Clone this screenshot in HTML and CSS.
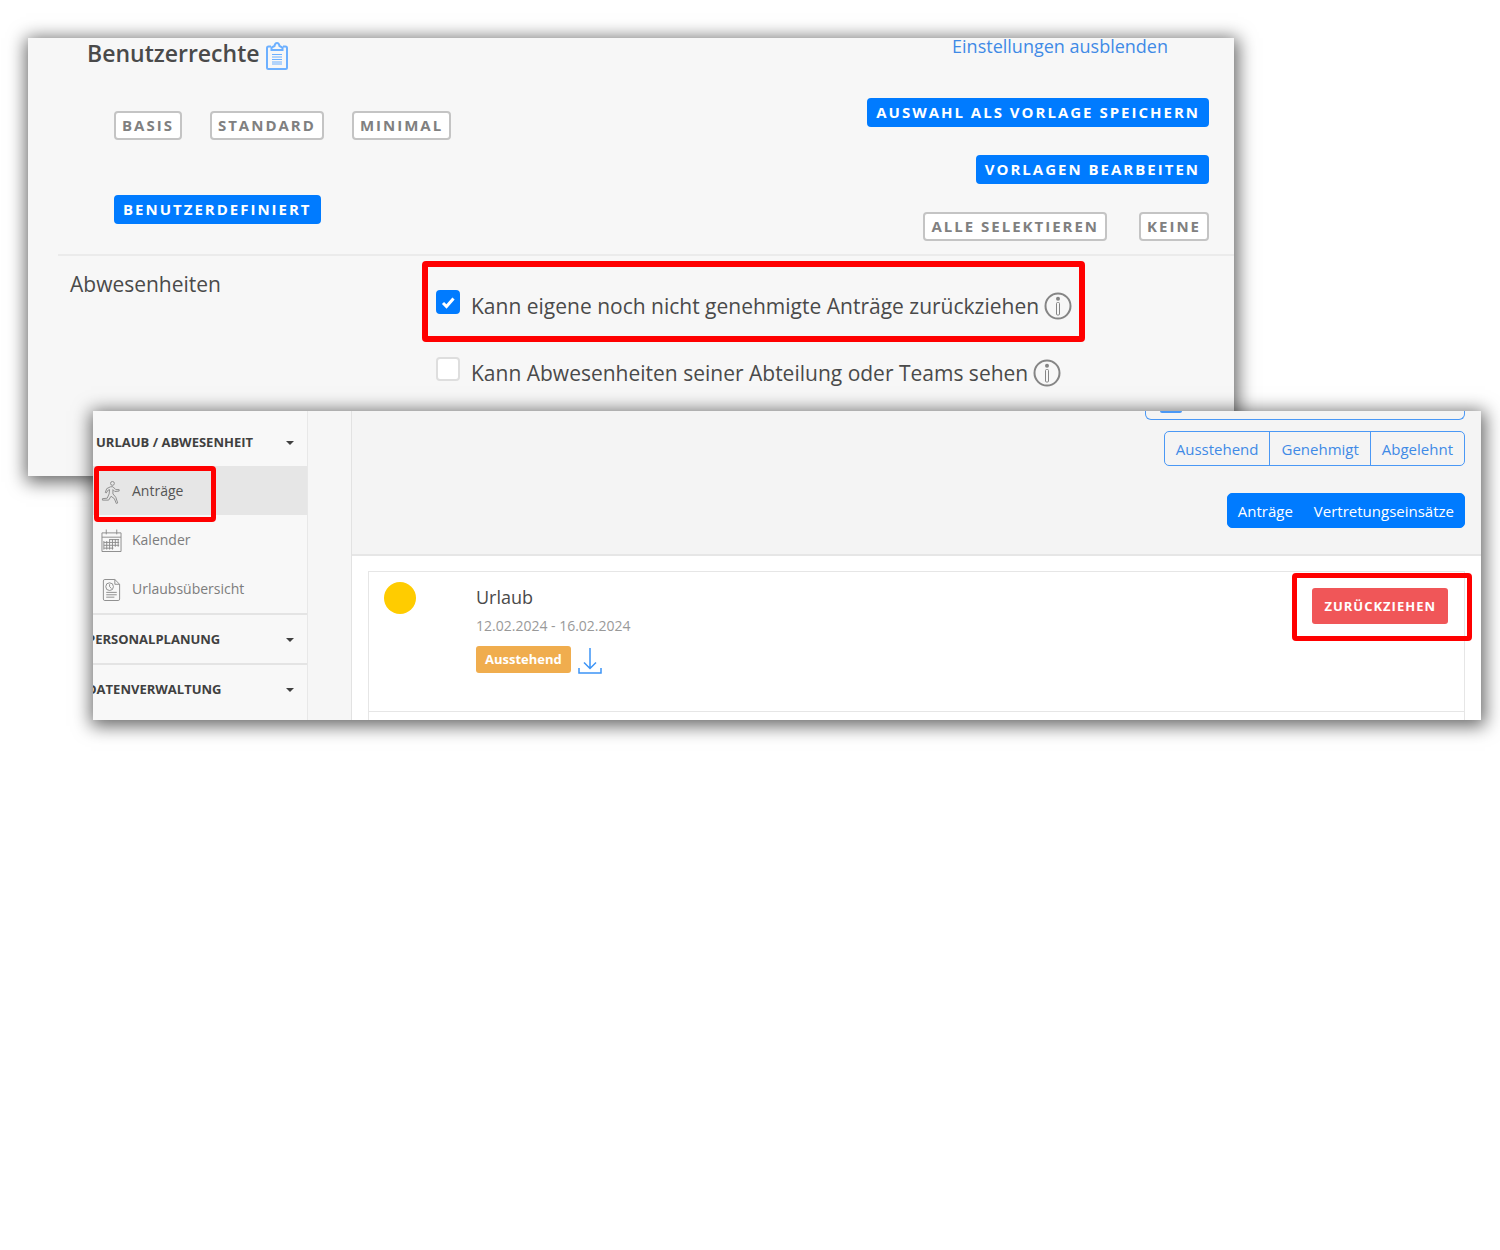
FILE: index.html
```html
<!DOCTYPE html>
<html lang="de">
<head>
<meta charset="utf-8">
<title>Benutzerrechte und Anträge</title>
<link rel="stylesheet" href="styles.css">
</head>
<body>
<section class="panel rights">
  <div class="rights-head">
    <div class="presets">
      <h1 class="rights-title">Benutzerrechte
        <svg class="clipboard" viewBox="0 0 22 28" aria-hidden="true"><path d="M5 4.500H2.500Q1 4.500 1 6V25.500Q1 27 2.500 27H19.500Q21 27 21 25.500V6Q21 4.500 19.500 4.500H17M5.500 8V5.500L8.500 4Q9 1 11 1T13.500 4L16.500 5.500V8Z"/><path class="lines" d="M6 12.500H16M6 15H16M6 17.500H16M6 20H16M6 22H16"/></svg>
      </h1>
      <div class="preset-row">
        <button class="tag">BASIS</button>
        <button class="tag">STANDARD</button>
        <button class="tag">MINIMAL</button>
      </div>
      <div class="preset-row"><button class="tag solid">BENUTZERDEFINIERT</button></div>
    </div>
    <div class="actions">
      <a class="toggle-link" href="#">Einstellungen ausblenden</a>
      <button class="tag solid">AUSWAHL ALS VORLAGE SPEICHERN</button>
      <button class="tag solid">VORLAGEN BEARBEITEN</button>
      <div class="select-row">
        <button class="tag">ALLE SELEKTIEREN</button>
        <button class="tag">KEINE</button>
      </div>
    </div>
  </div>
  <div class="rights-group">
    <h2 class="group-name">Abwesenheiten</h2>
    <div class="options">
      <div class="option marked">
        <input class="check" type="checkbox" id="withdraw" checked>
        <label for="withdraw">Kann eigene noch nicht genehmigte Anträge zurückziehen</label>
        <svg class="info" viewBox="0 0 28 28" aria-hidden="true"><circle cx="14" cy="14" r="12.500"/><circle class="dot" cx="14" cy="6.700" r="2"/><rect x="12.500" y="10.500" width="3" height="12.500" rx="1"/></svg>
      </div>
      <div class="option">
        <input class="check" type="checkbox" id="team">
        <label for="team">Kann Abwesenheiten seiner Abteilung oder Teams sehen</label>
        <svg class="info" viewBox="0 0 28 28" aria-hidden="true"><circle cx="14" cy="14" r="12.500"/><circle class="dot" cx="14" cy="6.700" r="2"/><rect x="12.500" y="10.500" width="3" height="12.500" rx="1"/></svg>
      </div>
    </div>
  </div>
</section>

<section class="panel requests">
  <nav class="sidebar">
    <button class="side-head">URLAUB / ABWESENHEIT<span class="caret"></span></button>
    <a class="side-item active" href="#">
      <svg class="side-icon" viewBox="0 0 22 24" aria-hidden="true"><circle cx="12" cy="3" r="2"/><path d="M10 6.500L6 8.500L4.500 12.500L5.500 13L7.500 10L9 9.500L8.500 14L6.500 18.500L1.500 19V20.500L8 20.500L10.500 16.500L14 19L16 24L17.500 23.500L15.500 17.500L12.500 14V9.500L14.500 11.500L19 11V9.500L15.500 9.500L12.500 6.500Z"/></svg>
      Anträge</a>
    <a class="side-item" href="#">
      <svg class="side-icon" viewBox="0 0 22 24" aria-hidden="true"><path d="M1 3.500H21V23H1ZM1 8H21M5.500 0V5M16.500 0V5"/><path d="M9 10.500H19M3 13.500H19M3 16.500H19M3 19.500H13M3 12V21M6 12V21M9 10V21M12 10V21M15 10V18M18 10V18"/></svg>
      Kalender</a>
    <a class="side-item" href="#">
      <svg class="side-icon" viewBox="0 0 22 24" aria-hidden="true"><path d="M14.500 1H4Q2.500 1 2.500 2.500V21.500Q2.500 23 4 23H18Q19.500 23 19.500 21.500V6ZM14.500 1V6H19.500"/><circle cx="9" cy="8.500" r="4"/><path d="M9 6V8.500L11 10.500M5.500 14.500H16.500M5.500 17H16.500M5.500 19.500H14"/></svg>
      Urlaubsübersicht</a>
    <button class="side-head ruled cut">PERSONALPLANUNG<span class="caret"></span></button>
    <button class="side-head ruled cut">DATENVERWALTUNG<span class="caret"></span></button>
  </nav>
  <main class="content">
    <header class="filters">
      <div class="filter-box"><span class="filter-chip"></span></div>
      <div class="group">
        <button class="group-btn">Ausstehend</button>
        <button class="group-btn">Genehmigt</button>
        <button class="group-btn">Abgelehnt</button>
      </div>
      <div class="group filled">
        <button class="group-btn">Anträge</button>
        <button class="group-btn">Vertretungseinsätze</button>
      </div>
    </header>
    <div class="list">
      <article class="request">
        <span class="state-dot"></span>
        <div class="request-text">
          <h3 class="request-title">Urlaub</h3>
          <p class="request-date">12.02.2024 - 16.02.2024</p>
          <div class="request-state">
            <span class="badge">Ausstehend</span>
            <a class="download" href="#" aria-label="Herunterladen"><svg class="download-icon" viewBox="0 0 24 26" aria-hidden="true"><path d="M12 0V20M6 14.500L12 20.500L18 14.500M1 20V25H23V20"/></svg></a>
          </div>
        </div>
        <div class="withdraw"><button class="withdraw-btn">ZURÜCKZIEHEN</button></div>
      </article>
    </div>
  </main>
</section>
</body>
</html>
```

FILE: styles.css
```css
*, *::before, *::after { box-sizing: border-box; }
body {
  margin: 0;
  padding: 38px 19px 38px 28px;
  background: #fff;
  color: #4a4a4a;
  font-family: "Open Sans", "Noto Sans", sans-serif;
}
button, input { font: inherit; margin: 0; }
button { cursor: pointer; white-space: nowrap; }
a { text-decoration: none; }
h1, h2, h3, p { margin: 0; font-weight: 400; }
svg { fill: none; stroke: currentColor; flex: none; }

.panel { box-shadow: 1px 3px 17px 3px rgba(0, 0, 0, .6); }

/* Rights panel */
.rights {
  margin-right: 247px;
  padding-bottom: 78px;
  background: #f7f7f7;
  overflow: clip;
}
.rights-head {
  display: flex;
  justify-content: space-between;
  margin-left: 30px;
  padding: 0 25px 13px 29px;
  border-bottom: 2px solid #ebebeb;
}
.rights-title {
  display: flex;
  align-items: center;
  gap: 7px;
  height: 30px;
  font-size: 23px;
  font-weight: 600;
}
.clipboard { width: 22px; height: 28px; margin-top: 5px; color: #6db0ff; stroke-width: 2; }
.clipboard .lines { stroke-width: 1; }
.preset-row { display: flex; gap: 28px; margin: 43px 0 0 27px; }
.preset-row + .preset-row { margin-top: 55px; }
.tag {
  height: 29px;
  padding: 0 6px 2px;
  border: 2px solid #c4c4c4;
  border-radius: 4px;
  background: #fff;
  color: #808080;
  font-size: 15px;
  font-weight: 700;
  line-height: 22px;
  letter-spacing: 2px;
}
.tag.solid { padding: 0 7px 2px; border-color: #007bff; background: #007bff; color: #fff; }
.actions { display: flex; flex-direction: column; align-items: flex-end; gap: 28px; }
.toggle-link { height: 32px; margin-right: 41px; color: #3f8ae6; font-size: 18px; line-height: 16px; }
.select-row { display: flex; gap: 32px; }
.rights-group { display: flex; padding: 5px 0 0 42px; }
.group-name { width: 352px; padding-top: 9px; font-size: 21px; line-height: 29px; }
.option {
  display: flex;
  align-items: center;
  width: fit-content;
  height: 50px;
  padding-left: 14px;
  font-size: 21px;
  line-height: 30px;
}
.option.marked { height: 81px; padding: 9px 7px 0 8px; border: 6px solid #f00; border-radius: 4px; margin-bottom: 6px; }
.option label { margin-left: 11px; }
.check {
  appearance: none;
  width: 24px;
  height: 24px;
  margin-bottom: 8px;
  border: 2px solid #dedede;
  border-radius: 4px;
  background: #fff;
}
.check:checked {
  border-color: #007bff;
  background: #007bff url("data:image/svg+xml,%3Csvg xmlns='http://www.w3.org/2000/svg' viewBox='0 0 20 20'%3E%3Cpath d='M5 11l3.500 3.500L15.500 6.500' fill='none' stroke='%23fff' stroke-width='3'/%3E%3C/svg%3E") center / 20px no-repeat;
}
.info { width: 28px; height: 28px; margin-left: 5px; color: #858585; stroke-width: 2; }
.info .dot { fill: currentColor; stroke: none; }
.info rect { stroke-width: 1; }

/* Requests panel, laid over the rights panel */
.requests {
  position: relative;
  display: flex;
  margin: -65px 0 0 65px;
  background: #f6f6f6;
}
.sidebar { width: 215px; padding: 6px 0; border-right: 1px solid #e8e8e8; background: #f8f8f8; overflow: clip; }
.side-head {
  display: flex;
  align-items: center;
  justify-content: space-between;
  width: 100%;
  height: 49px;
  padding: 0 13px 0 3px;
  border: 0;
  background: none;
  color: #404040;
  font-size: 13px;
  font-weight: 700;
}
.side-head.ruled { height: 50px; border-top: 2px solid #e4e4e4; }
.side-head.cut { text-indent: -9px; }
.caret { border: 4px solid transparent; border-top-color: #404040; border-bottom: 0; margin-top: 2px; }
.side-item {
  position: relative;
  display: flex;
  align-items: center;
  gap: 10px;
  height: 49px;
  padding-left: 8px;
  color: #7d7d7d;
  font-size: 14px;
}
.side-item.active { background: #e6e6e6; color: #555; }
.side-item.active::after, .withdraw::after { content: ""; position: absolute; border: 5px solid #f00; border-radius: 4px; }
.side-item.active::after { left: 1px; top: 0; width: 122px; height: 56px; z-index: 1; }
.side-icon { width: 21px; height: 24px; margin-top: 3px; color: #8c8c8c; stroke-width: 1; }
.content { flex: 1; margin-left: 43px; border-left: 1px solid #e2e2e2; background: #fff; }
.filters {
  display: flex;
  flex-direction: column;
  align-items: flex-end;
  padding: 0 16px 26px;
  border-bottom: 2px solid #e6e6e6;
  background: #f4f4f4;
}
.filter-box { width: 320px; height: 9px; padding-left: 14px; border: 1px solid #4a98f5; border-top: 0; border-radius: 0 0 6px 6px; }
.filter-chip { display: block; width: 22px; height: 2px; background: #4a98f5; border-radius: 0 0 3px 3px; }
.group { display: flex; margin-top: 11px; border: 1px solid #4a98f5; border-radius: 5px; }
.group-btn { height: 33px; padding: 0 11px; border: 0; background: none; color: #3f8ae6; font-size: 15px; }
.group-btn + .group-btn { border-left: 1px solid #4a98f5; }
.group.filled { margin-top: 27px; border-color: #007bff; background: #007bff; }
.group.filled .group-btn { padding: 0 10px; border-color: #007bff; color: #fff; }
.list { padding: 15px 16px 0; }
.request { display: flex; height: 141px; padding: 10px 16px 0 15px; border: 1px solid #e6e6e6; }
.list::after { content: ""; display: block; height: 8px; border: solid #e6e6e6; border-width: 0 1px; }
.state-dot { width: 32px; height: 32px; border-radius: 50%; background: #fc0; }
.request-text { flex: 1; margin-left: 60px; }
.request-title { font-size: 18px; line-height: 30px; }
.request-date { margin-top: 2px; color: #999; font-size: 14px; line-height: 24px; }
.request-state { display: flex; gap: 7px; margin-top: 8px; }
.badge { height: 27px; padding: 0 9px; border-radius: 3px; background: #f0ad4e; color: #fff; font-size: 13px; font-weight: 700; line-height: 27px; }
.download { height: 26px; margin-top: 2px; color: #3d94f6; }
.download-icon { display: block; width: 24px; height: 26px; stroke-width: 1.500; }
.withdraw { position: relative; height: 36px; margin-top: 6px; }
.withdraw::after { inset: -15px -24px -17px -20px; pointer-events: none; }
.withdraw-btn { height: 36px; padding: 0 12px; border: 0; border-radius: 3px; background: #f05658; color: #fff; font-size: 13px; font-weight: 700; letter-spacing: 1px; }
```
